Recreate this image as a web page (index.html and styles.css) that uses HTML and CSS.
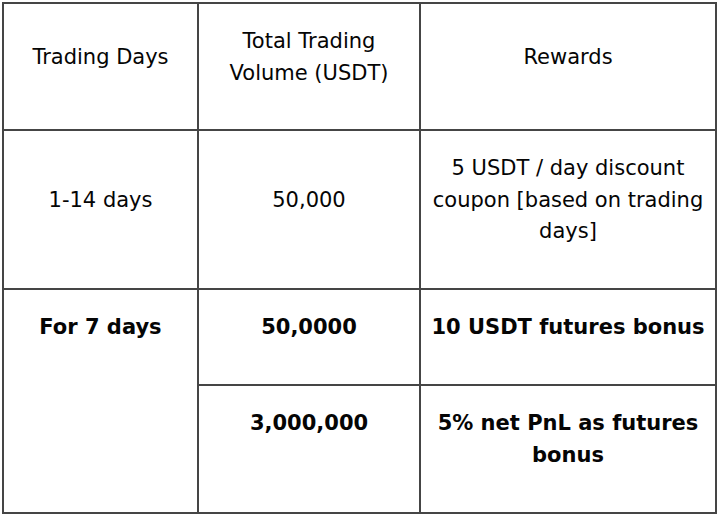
FILE: index.html
```html
<!DOCTYPE html>
<html>
<head>
<meta charset="utf-8">
<link rel="stylesheet" href="styles.css">
</head>
<body>
<table class="rewards">
  <colgroup>
    <col class="c1">
    <col class="c2">
    <col class="c3">
  </colgroup>
  <tr>
    <td>Trading Days</td>
    <td>Total Trading Volume (USDT)</td>
    <td>Rewards</td>
  </tr>
  <tr>
    <td>1-14 days</td>
    <td>50,000</td>
    <td>5 USDT / day discount coupon [based on trading days]</td>
  </tr>
  <tr class="bold top">
    <td rowspan="2">For 7 days</td>
    <td>50,0000</td>
    <td>10 USDT futures bonus</td>
  </tr>
  <tr class="bold top">
    <td>3,000,000</td>
    <td>5% net PnL as futures bonus</td>
  </tr>
</table>
</body>
</html>
```

FILE: styles.css
```css
html, body {
  margin: 0;
  padding: 0;
  background: #fff;
}
body {
  padding: 2px 0 0 2px;
  font-family: "DejaVu Sans", sans-serif;
  color: #050505;
}
.rewards {
  border-collapse: collapse;
  width: 715px;
  table-layout: fixed;
  font-size: 21px;
  line-height: 31.5px;
}
.c1 { width: 195px; }
.c2 { width: 222px; }
.c3 { width: 296px; }
.rewards td {
  border: 2px solid #454545;
  padding: 22px 8px 40px;
  text-align: center;
  vertical-align: middle;
}
.bold td {
  font-weight: bold;
}
.top td {
  vertical-align: top;
  padding-bottom: 41px;
}
```
